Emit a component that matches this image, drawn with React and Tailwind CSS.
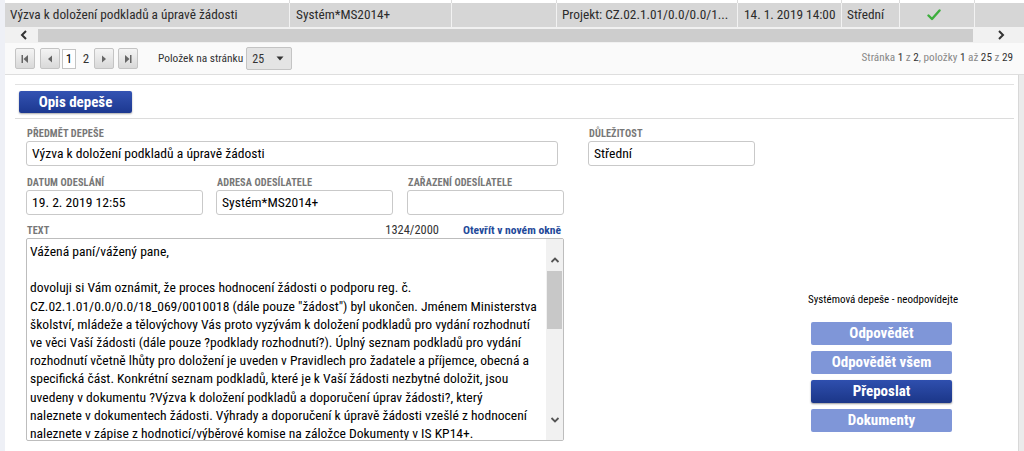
import React from 'react';

const font = "font-['Liberation_Sans_Narrow','Roboto_Condensed','DejaVu_Sans_Condensed',sans-serif]";

const textLines = [
  'Vážená paní/vážený pane,',
  '',
  'dovoluji si Vám oznámit, že proces hodnocení žádosti o podporu reg. č.',
  'CZ.02.1.01/0.0/0.0/18_069/0010018 (dále pouze "žádost") byl ukončen. Jménem Ministerstva',
  'školství, mládeže a tělovýchovy Vás proto vyzývám k doložení podkladů pro vydání rozhodnutí',
  've věci Vaší žádosti (dále pouze ?podklady rozhodnutí?). Úplný seznam podkladů pro vydání',
  'rozhodnutí včetně lhůty pro doložení je uveden v Pravidlech pro žadatele a příjemce, obecná a',
  'specifická část. Konkrétní seznam podkladů, které je k Vaší žádosti nezbytné doložit, jsou',
  'uvedeny v dokumentu ?Výzva k doložení podkladů a doporučení úprav žádosti?, který',
  'naleznete v dokumentech žádosti. Výhrady a doporučení k úpravě žádosti vzešlé z hodnocení',
  'naleznete v zápise z hodnoticí/výběrové komise na záložce Dokumenty v IS KP14+.',
];

// ikony stránkování
const PagerIcon = ({ type }) => (
  <svg width="10" height="10" viewBox="0 0 10 10" className="text-[#666]">
    {type === 'first' && (<><rect x="1.5" y="1" width="1.5" height="8" fill="currentColor" /><path d="M8 1 L3.5 5 L8 9 Z" fill="currentColor" /></>)}
    {type === 'prev' && <path d="M7 1.5 L3 5 L7 8.5 Z" fill="currentColor" />}
    {type === 'next' && <path d="M3 1.5 L7 5 L3 8.5 Z" fill="currentColor" />}
    {type === 'last' && (<><path d="M2 1 L6.5 5 L2 9 Z" fill="currentColor" /><rect x="7" y="1" width="1.5" height="8" fill="currentColor" /></>)}
  </svg>
);

const PagerBtn = ({ type, className = '' }) => (
  <div className={`w-[20px] h-[21px] flex items-center justify-center border border-[#c4c4c4] rounded-[2px] bg-linear-to-b from-[#f4f4f4] to-[#d9d9d9] ${className}`}>
    <PagerIcon type={type} />
  </div>
);

const Label = ({ children, className = '' }) => (
  <div className={`text-[10.3px] leading-[12px] h-[12px] font-bold tracking-[0.1px] text-[#777] uppercase whitespace-nowrap ${className}`}>{children}</div>
);

const Input = ({ value, className = '' }) => (
  <div className={`h-[25px] border border-[#c9c9c9] rounded-[3px] bg-white px-[5px] text-[13.6px] leading-[23px] text-black whitespace-nowrap overflow-hidden ${className}`}>
    {value}
  </div>
);

const SideBtn = ({ children, dark }) => (
  <div className={`w-[141px] h-[23px] rounded-[2px] flex items-center justify-center text-white text-[15px] font-bold ${dark ? 'bg-linear-to-b from-[#2f4fae] to-[#1b3688] shadow-[0_1px_2px_rgba(0,0,0,0.4)]' : 'bg-[#7f96d8]'}`}>
    {children}
  </div>
);

export default function App() {
  return (
    <div className={`w-[1024px] h-[451px] overflow-hidden bg-[#eef0f6] flex flex-col ${font}`}>
      {/* grid */}
      <div className="pl-[5px]">
        <div className="h-[3px] bg-white flex">
          <div className="w-[285px] border-r border-[#dcdcdc]" />
          <div className="w-[162px] border-r border-[#dcdcdc]" />
          <div className="w-[105px] border-r border-[#dcdcdc]" />
          <div className="w-[181px] border-r border-[#dcdcdc]" />
          <div className="w-[104px] border-r border-[#dcdcdc]" />
          <div className="w-[58px] border-r border-[#dcdcdc]" />
          <div className="w-[75px] border-r border-[#dcdcdc]" />
          <div className="flex-1" />
        </div>
        <div className="h-[24px] bg-[#d6d6d6] flex items-center text-[13.3px] text-[#2b2b2b] whitespace-nowrap">
          <div className="w-[285px] h-full border-r border-[#f2f2f2] pl-[5px] leading-[24px]">Výzva k doložení podkladů a úpravě žádosti</div>
          <div className="w-[162px] h-full border-r border-[#f2f2f2] pl-[6px] leading-[24px]">Systém*MS2014+</div>
          <div className="w-[105px] h-full border-r border-[#f2f2f2]" />
          <div className="w-[181px] h-full border-r border-[#f2f2f2] pl-[5px] leading-[24px]">Projekt: CZ.02.1.01/0.0/0.0/1...</div>
          <div className="w-[104px] h-full border-r border-[#f2f2f2] pl-[6px] leading-[24px]">14. 1. 2019 14:00</div>
          <div className="w-[58px] h-full border-r border-[#f2f2f2] pl-[5px] leading-[24px]">Střední</div>
          <div className="w-[75px] h-full border-r border-[#f2f2f2] flex items-center justify-center pr-[6px]">
            <svg width="14" height="12" viewBox="0 0 14 12"><path d="M1.5 6.5 L5 10 L12.5 1.5" stroke="#3dae3d" strokeWidth="2.4" fill="none" strokeLinecap="round" strokeLinejoin="round" /></svg>
          </div>
          <div className="flex-1" />
        </div>
        {/* horizontal scrollbar */}
        <div className="h-[16px] bg-[#f1f1f1] flex items-center">
          <div className="w-[33px] flex justify-center pl-[5px]">
            <svg width="8" height="10" viewBox="0 0 8 10"><path d="M6 1 L2 5 L6 9" stroke="#333" strokeWidth="2" fill="none" /></svg>
          </div>
          <div className="w-[935px] h-[13px] bg-[#cdcdcd]" />
          <div className="flex-1 flex justify-center pl-[4px]">
            <svg width="8" height="10" viewBox="0 0 8 10"><path d="M2 1 L6 5 L2 9" stroke="#333" strokeWidth="2" fill="none" /></svg>
          </div>
        </div>
        {/* pager */}
        <div className="h-[32px] bg-[#fafafa] border-b border-[#dedede] flex items-center pl-[10px] pr-[11px]">
          <div className="flex items-center">
            <PagerBtn type="first" />
            <PagerBtn type="prev" className="ml-[5px]" />
            <div className="ml-[2px] w-[14px] h-[20px] bg-white border border-[#c4c4c4] flex items-center justify-center text-[13px] text-black">1</div>
            <div className="ml-[4px] w-[12px] text-center text-[13px] text-[#333]">2</div>
            <PagerBtn type="next" className="ml-[2px]" />
            <PagerBtn type="last" className="ml-[4px]" />
          </div>
          <div className="ml-[20px] text-[11.4px] text-[#333]">Položek na stránku</div>
          <div className="ml-[3px] w-[46px] h-[23px] border border-[#c4c4c4] rounded-[2px] bg-[#e4e4e4] flex items-center justify-between pl-[5px] pr-[7px] text-[12px] text-[#333]">
            <span>25</span>
            <svg width="8" height="5" viewBox="0 0 8 5"><path d="M0.5 0.5 L7.5 0.5 L4 4.5 Z" fill="#333" /></svg>
          </div>
          <div className="ml-auto text-[11.2px] text-[#888]">
            Stránka <span className="text-[#333]">1</span> z <span className="text-[#333]">2</span>, položky <span className="text-[#333]">1</span> až <span className="text-[#333]">25</span> z <span className="text-[#333]">29</span>
          </div>
        </div>
      </div>

      {/* detail */}
      <div className="flex flex-1 pl-[5px]">
        <div className="flex-1 bg-white pt-[9px] pr-[4px]">
          <div className="ml-[10px] border-t border-[#e2e2e2] pt-[6px]">
            <div className="ml-[4px] w-[113px] h-[22px] rounded-[2px] bg-linear-to-b from-[#3453b3] to-[#1c3890] flex items-center justify-center text-white text-[15px] font-bold shadow-[0_1px_2px_rgba(0,0,0,0.35)]">
              Opis depeše
            </div>
          </div>
          <div className="ml-[10px] mt-[5px] border-t border-[#dcdcdc] flex">
            {/* left column */}
            <div className="ml-[11px] w-[538px]">
              <Label className="mt-[9px] mb-[1px] pl-[1px]">Předmět depeše</Label>
              <Input value="Výzva k doložení podkladů a úpravě žádosti" className="w-[532px]" />
              <div className="flex mt-[11px]">
                <div className="w-[190px]">
                  <Label className="pl-[1px]">Datum odeslání</Label>
                  <Input value="19. 2. 2019 12:55" className="w-[177px] mt-[1px]" />
                </div>
                <div className="w-[191px]">
                  <Label className="pl-[1px]">Adresa odesílatele</Label>
                  <Input value="Systém*MS2014+" className="w-[177px] mt-[1px]" />
                </div>
                <div>
                  <Label className="pl-[1px]">Zařazení odesílatele</Label>
                  <Input value="" className="w-[157px] mt-[1px]" />
                </div>
              </div>
              <div className="flex items-end mt-[10px] mb-[1px] h-[12px]">
                <Label className="pl-[1px]">Text</Label>
                <div className="ml-auto text-[12.4px] leading-[14px] text-[#333]">1324/2000</div>
                <div className="ml-[24px] mr-[3px] text-[11.6px] leading-[14px] font-bold text-[#1f4a9a]">Otevřít v novém okně</div>
              </div>
              <div className="h-[203px] border border-[#bdbdbd] rounded-[2px] flex overflow-hidden">
                <div className="flex-1 pl-[3px] pt-[3px] text-[13.6px] leading-[18.2px] text-black overflow-hidden">
                  {textLines.map((line, i) => (
                    <div key={i} className="whitespace-nowrap h-[18.2px]">{line}</div>
                  ))}
                </div>
                <div className="w-[17px] bg-[#f1f1f1] flex flex-col items-center">
                  <svg width="10" height="8" viewBox="0 0 10 8" className="mt-[17px]"><path d="M1.5 6 L5 2.5 L8.5 6" stroke="#555" strokeWidth="1.8" fill="none" /></svg>
                  <div className="mt-[7px] w-[15px] h-[58px] bg-[#c8c8c8]" />
                  <div className="flex-1" />
                  <svg width="10" height="8" viewBox="0 0 10 8" className="mb-[16px]"><path d="M1.5 2 L5 5.5 L8.5 2" stroke="#555" strokeWidth="1.8" fill="none" /></svg>
                </div>
              </div>
            </div>
            {/* right column */}
            <div className="ml-[24px] flex flex-col">
              <Label className="mt-[9px] mb-[1px] pl-[1px]">Důležitost</Label>
              <Input value="Střední" className="w-[167px]" />
              <div className="ml-[220px] mt-[127px]">
                <div className="text-[11px] leading-[14px] text-black whitespace-nowrap">Systémová depeše - neodpovídejte</div>
                <div className="ml-[3px] mt-[15px] flex flex-col gap-[6px]">
                  <SideBtn>Odpovědět</SideBtn>
                  <SideBtn>Odpovědět všem</SideBtn>
                  <SideBtn dark>Přeposlat</SideBtn>
                  <SideBtn>Dokumenty</SideBtn>
                </div>
              </div>
            </div>
          </div>
        </div>
        <div className="w-[6px] bg-[#ebebeb] border-l border-[#d8d8d8]" />
      </div>
    </div>
  );
}
